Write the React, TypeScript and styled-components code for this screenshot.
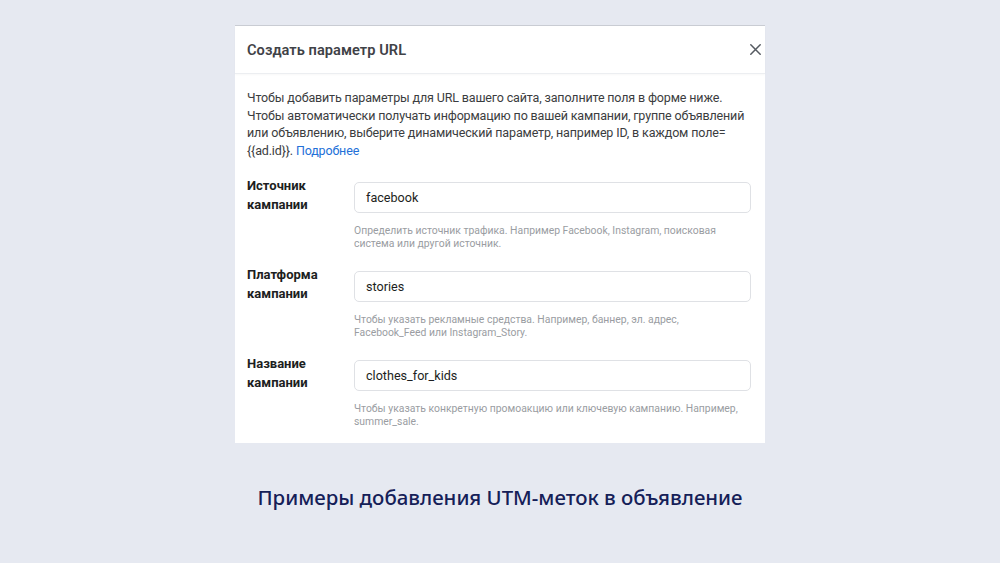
import React from "react";
import styled, { createGlobalStyle } from "styled-components";

const Global = createGlobalStyle`
  html, body { margin: 0; padding: 0; }
  body {
    width: 1000px;
    height: 563px;
    background: #e6e9f1;
    font-family: Roboto, "Liberation Sans", Arial, sans-serif;
    overflow: hidden;
  }
`;

const Page = styled.div`
  width: 1000px;
  height: 563px;
  display: flex;
  flex-direction: column;
  align-items: center;
  padding-top: 25px;
  box-sizing: border-box;
`;

const Dialog = styled.div`
  width: 530px;
  height: 418px;
  background: #ffffff;
  border-top: 1px solid #c9ccd3;
  box-sizing: border-box;
  display: flex;
  flex-direction: column;
`;

const Header = styled.div`
  height: 48px;
  flex-shrink: 0;
  display: flex;
  align-items: center;
  justify-content: space-between;
  padding: 0 0 0 12px;
  border-bottom: 1px solid #eceef1;
  box-sizing: border-box;
  box-shadow: 0 1px 2px rgba(0, 0, 0, 0.03);
`;

const Title = styled.div`
  font-size: 14.6px;
  font-weight: 600;
  color: #3f4247;
  letter-spacing: 0.05px;
`;

const Close = styled.button`
  width: 20px;
  height: 20px;
  border: none;
  background: transparent;
  padding: 0;
  display: flex;
  align-items: center;
  justify-content: center;
  cursor: pointer;
`;

const Body = styled.div`
  padding: 15px 14px 0 12px;
  display: flex;
  flex-direction: column;
`;

const Intro = styled.p`
  margin: 0 0 17px 0;
  font-size: 12.5px;
  line-height: 17.5px;
  color: #3b3d40;
  letter-spacing: -0.15px;
`;

const Link = styled.a`
  color: #2270d8;
  text-decoration: none;
`;

const Row = styled.div`
  display: grid;
  grid-template-columns: 107px 1fr;
  margin-bottom: 15px;
`;

const Label = styled.div`
  font-size: 13px;
  font-weight: 700;
  line-height: 19px;
  color: #1c1e21;
`;

const Field = styled.div`
  display: flex;
  flex-direction: column;
  padding-top: 5.5px;
`;

const Input = styled.div`
  height: 31px;
  box-sizing: border-box;
  border: 1px solid #dfe1e5;
  border-radius: 5px;
  padding: 0 11px;
  display: flex;
  align-items: center;
  font-size: 12.6px;
  color: #1c1e21;
`;

const Hint = styled.div`
  margin-top: 11.5px;
  font-size: 10.4px;
  line-height: 13px;
  color: #9a9da2;
`;

const Caption = styled.div`
  margin-top: 40px;
  font-family: "Noto Sans", "DejaVu Sans", sans-serif;
  font-size: 20.4px;
  font-weight: 500;
  color: #152058;
  letter-spacing: 0px;
`;

const fields = [
  {
    label: ["Источник", "кампании"],
    value: "facebook",
    hint: "Определить источник трафика. Например Facebook, Instagram, поисковая система или другой источник.",
  },
  {
    label: ["Платформа", "кампании"],
    value: "stories",
    hint: "Чтобы указать рекламные средства. Например, баннер, эл. адрес, Facebook_Feed или Instagram_Story.",
  },
  {
    label: ["Название", "кампании"],
    value: "clothes_for_kids",
    hint: "Чтобы указать конкретную промоакцию или ключевую кампанию. Например, summer_sale.",
  },
];

export default function App() {
  return (
    <>
      <Global />
      <Page>
        <Dialog>
          <Header>
            <Title>Создать параметр URL</Title>
            <Close aria-label="Закрыть">
              <svg width="11" height="11" viewBox="0 0 11 11">
                <path d="M0.8 0.8 L10.2 10.2 M10.2 0.8 L0.8 10.2" stroke="#555a61" strokeWidth="1.5" strokeLinecap="round" />
              </svg>
            </Close>
          </Header>
          <Body>
            <Intro>
              Чтобы добавить параметры для URL вашего сайта, заполните поля в форме ниже. Чтобы
              автоматически получать информацию по вашей кампании, группе объявлений или объявлению,
              выберите динамический параметр, например ID, в каждом поле=
              <br />
              {"{{ad.id}}. "}
              <Link href="#">Подробнее</Link>
            </Intro>
            {fields.map((f) => (
              <Row key={f.value}>
                <Label>
                  {f.label[0]}
                  <br />
                  {f.label[1]}
                </Label>
                <Field>
                  <Input>{f.value}</Input>
                  <Hint>{f.hint}</Hint>
                </Field>
              </Row>
            ))}
          </Body>
        </Dialog>
        <Caption>Примеры добавления UTM-меток в объявление</Caption>
      </Page>
    </>
  );
}
